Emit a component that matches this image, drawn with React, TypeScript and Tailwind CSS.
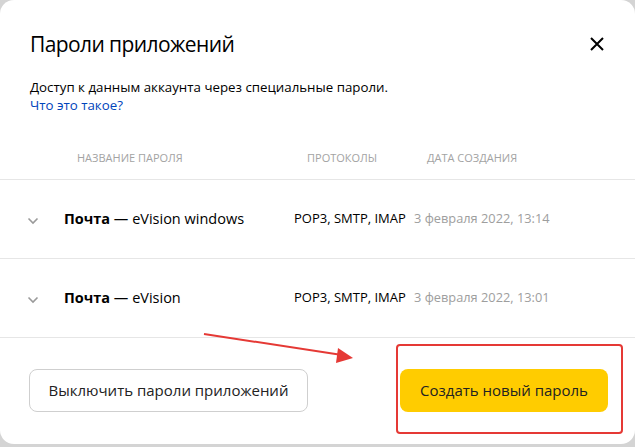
import React from "react";

const rows = [
  { app: "eVision windows", date: "3 февраля 2022, 13:14" },
  { app: "eVision", date: "3 февраля 2022, 13:01" },
];

function Chevron() {
  return (
    <svg width="12" height="8" viewBox="0 0 12 8" className="block">
      <path d="M1.5 1.5 L6 6 L10.5 1.5" fill="none" stroke="#9a9a9a" strokeWidth="1.6" />
    </svg>
  );
}

export default function App() {
  return (
    <div
      className="relative w-[635px] h-[447px] overflow-hidden bg-[#d4d4d4]"
      style={{ fontFamily: '"Open Sans", "Noto Sans", sans-serif' }}
    >
      <div className="h-[444px] bg-white rounded-[14px] flex flex-col">
        <div className="flex items-start justify-between pl-[30px] pr-[30px] pt-[29px]">
          <h1 className="text-[21px] leading-[30px] text-[#000] tracking-[-0.6px]">Пароли приложений</h1>
          <svg width="16" height="16" viewBox="0 0 16 16" className="mt-[7px]">
            <path d="M2 2 L14 14 M14 2 L2 14" stroke="#000" strokeWidth="2" />
          </svg>
        </div>
        <div className="pl-[30px] mt-[19px] text-[13.3px] leading-[18px] text-[#000]">
          <p>Доступ к данным аккаунта через специальные пароли.</p>
          <a className="text-[#0044bb]">Что это такое?</a>
        </div>
        <div className="grid grid-cols-[64px_230px_120px_1fr] mt-[37px] h-[28px] items-start text-[11px] leading-[14px] text-[#a3a3a3]">
          <div />
          <div className="pl-[13px]">НАЗВАНИЕ ПАРОЛЯ</div>
          <div className="pl-[13px]">ПРОТОКОЛЫ</div>
          <div className="pl-[13px]">ДАТА СОЗДАНИЯ</div>
        </div>
        <div className="border-t border-[#e6e6e6]">
          {rows.map((r) => (
            <div
              key={r.app}
              className="grid grid-cols-[64px_230px_120px_1fr] h-[79px] items-center border-b border-[#e6e6e6]"
            >
              <div className="pl-[27px] pt-[4px]">
                <Chevron />
              </div>
              <div className="text-[14.5px] text-[#000]">
                <span className="font-bold">Почта</span> — {r.app}
              </div>
              <div className="text-[13px] text-[#000]">POP3, SMTP, IMAP</div>
              <div className="text-[12.8px] text-[#9e9e9e]">{r.date}</div>
            </div>
          ))}
        </div>
        <div className="flex items-center justify-between pl-[29px] pr-[27px] pt-[31px]">
          <button className="h-[43px] w-[279px] rounded-[8px] border border-[#cfcfcf] text-[15px] text-[#222]">
            Выключить пароли приложений
          </button>
          <button className="h-[43px] w-[208px] rounded-[8px] bg-[#ffcc00] text-[15px] text-[#222]">
            Создать новый пароль
          </button>
        </div>
      </div>
      <div className="absolute left-[396px] top-[344px] w-[227px] h-[90px] border-[2.5px] border-[#e53935] rounded-[4px]" />
      <svg className="absolute left-0 top-0" width="635" height="447" viewBox="0 0 635 447">
        <line x1="204" y1="334" x2="342" y2="355" stroke="#e53935" strokeWidth="2" />
        <path d="M353 358 L338 348 L336 363 Z" fill="#e53935" />
      </svg>
    </div>
  );
}
